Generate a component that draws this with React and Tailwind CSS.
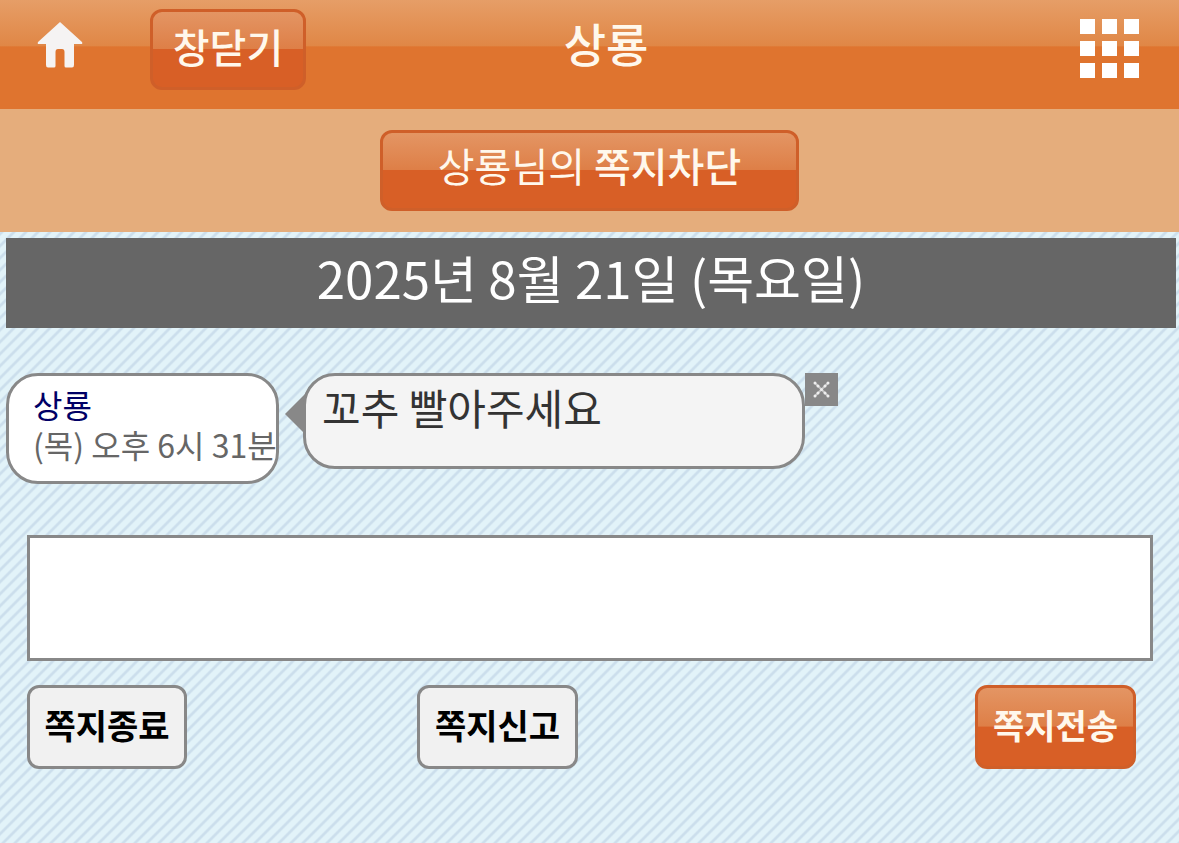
import React, { useState } from 'react';

const glossy =
  'rounded-xl border-3 border-[#cf5f29] bg-[linear-gradient(to_bottom,#e49766_0%,#de7f47_49%,#d85f26_50%,#d85f26_100%)] bg-origin-border text-[#fff8ec]';

const plain = 'rounded-xl border-3 border-[#888] bg-[#f1f1f1] text-black';

const HomeIcon = () => (
  <svg viewBox="0 0 46 46" className="h-[46px] w-[46px]" fill="#f5f3f3">
    <path d="M23 0 L45 20 Q46 22 44 22 H37 V43 Q37 45.500 35 45.500 H29 Q27.500 45.500 27.500 44 V30 Q27.500 27 25 27 H21 Q18.500 27 18.500 30 V44 Q18.500 45.500 17 45.500 H11 Q9 45.500 9 43 V22 H2 Q0 22 1 20 Z" />
  </svg>
);

const CloseIcon = () => (
  <svg viewBox="0 0 17 17" className="h-[17px] w-[17px]" fill="none" stroke="#eee" strokeLinecap="round">
    <path d="M2 2 L15 15 M15 2 L2 15" strokeWidth="2" strokeOpacity="0.6" />
    <path d="M2 2 h0 M5 5 h0 M8.500 8.500 h0 M12 12 h0 M15 15 h0 M15 2 h0 M12 5 h0 M5 12 h0 M2 15 h0" strokeWidth="3" />
  </svg>
);

const App = () => {
  const [message, setMessage] = useState('');
  const [visible, setVisible] = useState(true);

  return (
    <div className="min-h-screen bg-[#e2f3f9] bg-[linear-gradient(135deg,#e2f3f9_12%,#cbdeec_22%,#cbdeec_28%,#e2f3f9_38%,#e2f3f9_62%,#cbdeec_72%,#cbdeec_78%,#e2f3f9_88%)] bg-[length:12px_12px] font-['Noto_Sans_CJK_KR',sans-serif]">
      <header className="grid h-[109px] grid-cols-[1fr_auto_1fr] items-start bg-[linear-gradient(to_bottom,#e69e67_0%,#e08746_42%,#df742f_43%,#df742f_100%)] pr-10 pl-[37px]">
        <div className="flex gap-[67px]">
          <a href="#home" aria-label="홈" className="pt-[22px]">
            <HomeIcon />
          </a>
          <button type="button" className={`mt-[9px] h-[81px] w-[156px] pb-2 text-[40px] leading-none font-medium ${glossy}`}>
            창닫기
          </button>
        </div>
        <h1 className="pt-3 pl-9 text-[46px] leading-[60px] font-medium text-[#fff8ec]">상룡</h1>
        <button type="button" aria-label="메뉴" className="mt-[19px] grid grid-cols-3 gap-[7px] justify-self-end">
          {[...Array(9)].map((_, i) => (
            <span key={i} className="h-[15px] w-[15px] bg-white" />
          ))}
        </button>
      </header>

      <div className="flex h-[123px] justify-center bg-[#e5ad7c] pt-[21px]">
        <button type="button" className={`h-[81px] w-[419px] pb-3 text-[40px] leading-none ${glossy}`}>
          상룡님의 <span className="font-medium">쪽지차단</span>
        </button>
      </div>

      <main className="pt-[6px]">
        <h2 className="mr-[3px] ml-[6px] h-[90px] bg-[#666] text-center text-[51px] leading-[78px] text-white">
          2025년 8월 21일 (목요일)
        </h2>

        {visible && (
          <div className="flex items-start pt-[45px] pl-[6px]">
            <div className="h-[111px] w-[273px] rounded-[32px] border-3 border-[#888] bg-white pt-2 pl-6 whitespace-nowrap">
              <p className="text-[32px] leading-10 text-[#000066]">상룡</p>
              <p className="text-[32px] leading-10 text-[#666]">(목) 오후 6시 31분</p>
            </div>
            <svg viewBox="0 0 20 40" className="mt-[21px] ml-[6px] h-10 w-5" fill="#888">
              <path d="M0 20 L20 0 V40 Z" />
            </svg>
            <p className="-ml-[2px] h-[96px] w-[502px] rounded-[32px] border-3 border-[#888] bg-[#f4f4f4] px-4 text-[42px] leading-[62px] text-[#333]">
              꼬추 빨아주세요
            </p>
            <button
              type="button"
              aria-label="삭제"
              className="flex h-[33px] w-[33px] items-center justify-center bg-[#888]"
              onClick={() => setVisible(false)}
            >
              <CloseIcon />
            </button>
          </div>
        )}

        <form className="pt-[51px] pr-[26px] pl-[27px]" onSubmit={(e) => e.preventDefault()}>
          <textarea
            aria-label="쪽지 내용"
            value={message}
            onChange={(e) => setMessage(e.target.value)}
            className="block h-[126px] w-full resize-none border-3 border-[#888] bg-white p-3 text-[40px] outline-none"
          />
          <div className="grid grid-cols-[390px_1fr_auto] pt-6 pr-[17px] text-[34px] leading-none font-bold">
            <button type="button" className={`h-[84px] w-[160px] pb-1 ${plain}`}>쪽지종료</button>
            <button type="button" className={`h-[84px] w-[161px] pb-1 ${plain}`}>쪽지신고</button>
            <button type="submit" className={`h-[84px] w-[161px] pb-1 ${glossy}`}>쪽지전송</button>
          </div>
        </form>
      </main>
    </div>
  );
};

export default App;
